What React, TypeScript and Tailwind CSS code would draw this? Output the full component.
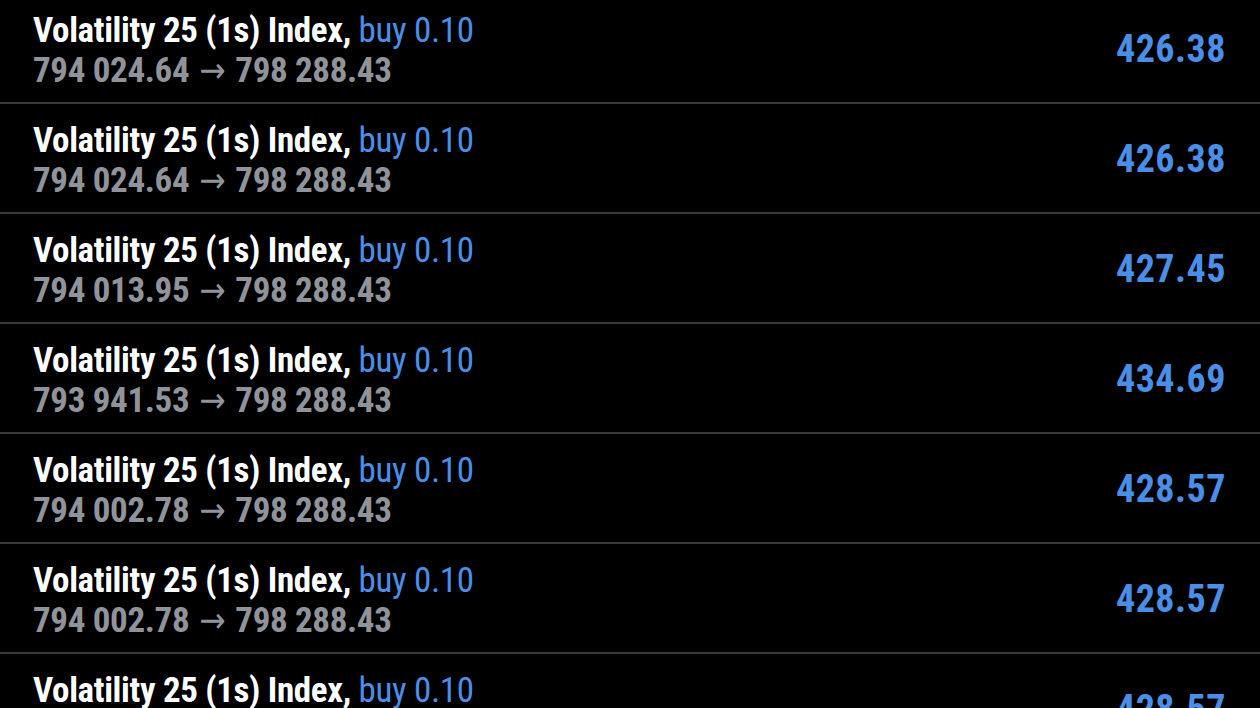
const rows = [
  { from: '794 024.64', price: '426.38' },
  { from: '794 024.64', price: '426.38' },
  { from: '794 013.95', price: '427.45' },
  { from: '793 941.53', price: '434.69' },
  { from: '794 002.78', price: '428.57' },
  { from: '794 002.78', price: '428.57' },
  { from: '794 002.78', price: '428.57' },
]

export default function App() {
  return (
    <div
      className="w-[1260px] h-[708px] overflow-hidden bg-black"
      style={{ fontFamily: '"Roboto Condensed", "Liberation Sans Narrow", "DejaVu Sans Condensed", sans-serif' }}
    >
      <div className="-mt-[6px]">
        {rows.map((row, i) => (
          <div key={i} className="h-[110px] flex items-center justify-between pl-[33px] pr-[34px] border-b-2 border-[#3a3a3a]">
            <div className="mt-[6px] leading-[40px] tracking-[-0.35px] whitespace-nowrap">
              <div className="text-[35px] font-bold text-white">
                Volatility 25 (1s) Index, <span className="font-normal text-[#4a8fe7]">buy 0.10</span>
              </div>
              <div className="text-[35px] font-bold text-[#90949a]">
                {row.from}<span className="font-normal px-[10px]">→</span>798 288.43
              </div>
            </div>
            <div className="mt-[2px] text-[38px] font-bold text-[#4a8fe7] tracking-[0.5px]">{row.price}</div>
          </div>
        ))}
      </div>
    </div>
  )
}
